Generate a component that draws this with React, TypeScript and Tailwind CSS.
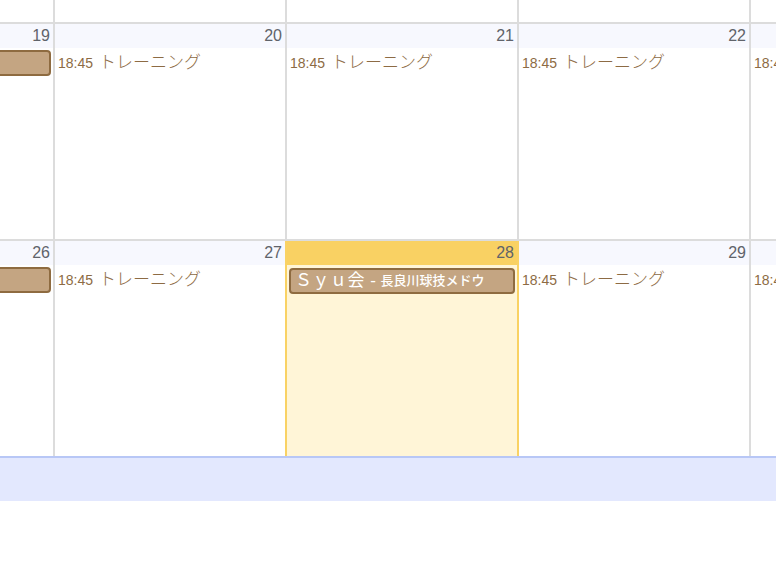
import React from "react";

const font = { fontFamily: '"Liberation Sans", Arial, "Noto Sans CJK JP", sans-serif' };

function Training() {
  return (
    <div className="mt-[2px] ml-[3px] flex items-baseline whitespace-nowrap text-[#8d6b44]">
      <span className="text-[14px]">18:45</span>
      <span className="ml-[6px] text-[17px] font-light">トレーニング</span>
    </div>
  );
}

function GreyPill() {
  return (
    <div className="mt-[2px] mr-[2px] ml-[2px] h-[26px] rounded-[4px] border-2 border-[#8e6b40] bg-[#c4a582]" />
  );
}

type Cell = { n: string; kind: "pill" | "train" | "today" | "none"; yellowRight?: boolean };

function DayCell({ c }: { c: Cell }) {
  const today = c.kind === "today";
  return (
    <div
      className={
        "w-[232px] shrink-0 h-full border-r-2 " +
        (today ? "border-[#f9d264] bg-[#fff5d7]" : c.yellowRight ? "border-[#f9d264]" : "border-[#dcdcdc]")
      }
    >
      <div
        className={
          "h-[24px] pr-[3px] flex items-center justify-end text-[16px] text-[#60636a] " +
          (today ? "bg-[#f9d163]" : "bg-[#f7f8fe]")
        }
      >
        {c.n}
      </div>
      {c.kind === "pill" && <GreyPill />}
      {c.kind === "train" && <Training />}
      {today && (
        <div className="mt-[3px] mx-[2px] h-[26px] rounded-[4px] border-2 border-[#8e6b40] bg-[#c4a582] flex items-center pl-[4px] whitespace-nowrap text-white">
          <span className="text-[17px] tracking-[0.5px]">Ｓｙｕ会 -</span>
          <span className="ml-[4px] text-[13px] font-medium">長良川球技メドウ</span>
        </div>
      )}
    </div>
  );
}

function Row({ cells, h }: { cells: Cell[]; h: string }) {
  return (
    <div className={"flex -ml-[177px] " + h}>
      {cells.map((c, i) => (
        <DayCell key={i} c={c} />
      ))}
    </div>
  );
}

export default function App() {
  const row1: Cell[] = [
    { n: "19", kind: "pill" },
    { n: "20", kind: "train" },
    { n: "21", kind: "train" },
    { n: "22", kind: "train" },
    { n: "23", kind: "train" },
  ];
  const row2: Cell[] = [
    { n: "26", kind: "pill" },
    { n: "27", kind: "train", yellowRight: true },
    { n: "28", kind: "today" },
    { n: "29", kind: "train" },
    { n: "30", kind: "train" },
  ];
  return (
    <div className="w-[776px] h-[585px] overflow-hidden bg-white" style={font}>
      <div className="flex -ml-[177px] h-[22px]">
        {[0, 1, 2, 3, 4].map((i) => (
          <div key={i} className="w-[232px] shrink-0 h-full border-r-2 border-[#dcdcdc]" />
        ))}
      </div>
      <div className="h-[2px] bg-[#dcdcdc]" />
      <Row cells={row1} h="h-[215px]" />
      <div className="h-[2px] bg-[#dcdcdc]" />
      <Row cells={row2} h="h-[215px]" />
      <div className="h-[2px] bg-[#b8c7f6]" />
      <div className="h-[43px] bg-[#e3e8fe]" />
    </div>
  );
}
